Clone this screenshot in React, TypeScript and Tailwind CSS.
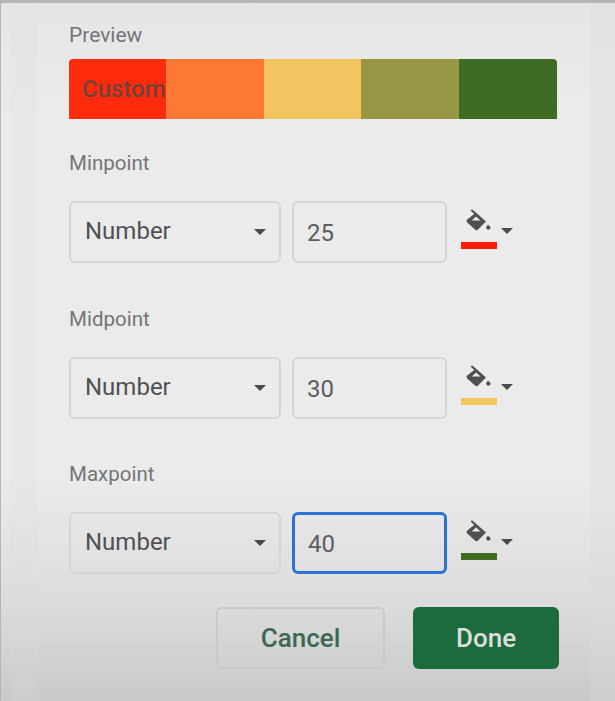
import React from 'react';

const FONT = "font-['Roboto','Liberation_Sans',sans-serif]";

const PaintIcon = () => (
  <svg width="26" height="24" viewBox="0 0 26 24" className="text-[#505052]">
    <path d="M4.6 1.4 L6 0.2 L11 4.6 L20 12.4 L12 20.6 C11.2 21.4 9.8 21.4 9 20.6 L1.2 13.4 C0.4 12.6 0.4 11.4 1.2 10.6 L8.2 5 Z" fill="currentColor" />
    <path d="M5.8 11.4 L10 7.4 L14.6 11.4 Z" fill="#ebebec" />
    <path d="M22 15.4 C23.2 16.8 24.6 17.4 24.6 18.8 C24.6 19.8 23.6 20.6 22.4 20.6 C21.2 20.6 20.2 19.8 20.2 18.8 C20.2 17.6 21 16.8 22 15.4 Z" fill="currentColor" />
  </svg>
);

const Caret = () => <span className="block h-0 w-0 border-x-[6.5px] border-t-[6px] border-x-transparent border-t-[#4a4a4c]" />;

interface RowProps {
  label: string;
  value: string;
  color: string;
  focused?: boolean;
}

const PointRow: React.FC<RowProps> = ({ label, value, color, focused }) => (
  <div>
    <div className="h-[24px] text-[20.5px] leading-[24px] text-[#747577]">{label}</div>
    <div className="mt-[26px] flex h-[62px] items-stretch">
      <div className="flex w-[212px] items-center justify-between rounded-[6px] border-2 border-[#d4d5d6] pl-[14px] pr-[13px]">
        <span className="-mt-[2px] text-[24px] text-[#505153]">Number</span>
        <Caret />
      </div>
      <div
        className={`ml-[11px] flex w-[155px] items-center rounded-[6px] pl-[13px] pt-[2px] text-[24px] text-[#5c5d5f] ${
          focused ? 'border-[3px] border-[#2a72d4]' : 'border-2 border-[#d4d5d6]'
        }`}
      >
        {value}
      </div>
      <div className="ml-[14px] flex w-[56px] flex-col pt-[8px]">
        <div className="flex h-[24px] items-start">
          <div className="ml-[5px] h-[24px] w-[26px]">
            <PaintIcon />
          </div>
          <div className="ml-[9px] mt-[19px]">
            <Caret />
          </div>
        </div>
        <div className="mt-[9px] h-[7px] w-[36px]" style={{ backgroundColor: color }} />
      </div>
    </div>
  </div>
);

export default function App() {
  return (
    <div className={`flex h-[701px] w-[615px] overflow-hidden border-t-[3px] border-l border-[#b4b5b6] bg-[linear-gradient(180deg,#e5e6e7_0%,#ebebec_16%,#ebebec_68%,#dcdcdc_86%,#c9c9c9_100%)] ${FONT}`}>
      <div className="w-[9px] shrink-0" />
      <div className="w-[28px] shrink-0 bg-[#d5dbe0]/20" />
      <div className="w-[31px] shrink-0" />
      <div className="flex-1">
        <div className="mt-[20px] h-[24px] text-[21px] leading-[24px] text-[#747577]">Preview</div>
        <div className="mt-[12px] flex h-[60px] w-[488px] overflow-hidden rounded-t-[4px]">
          <div className="flex w-[97px] items-center bg-[#fe2b0c] pl-[13px] text-[24px] font-medium whitespace-nowrap text-[#74403a]">Custom</div>
          <div className="w-[98px] bg-[#fd7735]" />
          <div className="w-[97px] bg-[#f3c561]" />
          <div className="w-[98px] bg-[#999745]" />
          <div className="w-[98px] bg-[#3e6c24]" />
        </div>
        <div className="mt-[32px] flex flex-col gap-[43.5px]">
          <PointRow label="Minpoint" value="25" color="#fb1c0c" />
          <PointRow label="Midpoint" value="30" color="#f2c65e" />
          <PointRow label="Maxpoint" value="40" color="#3f6c20" focused />
        </div>
        <div className="mt-[33px] flex h-[62px] w-[490px] justify-end gap-[28px]">
          <div className="flex w-[169px] items-center justify-center rounded-[6px] border-2 border-[#c8c9c9] text-[26px] font-medium text-[#3a6a52]">
            Cancel
          </div>
          <div className="flex w-[146px] items-center justify-center rounded-[6px] bg-[#1c6b3c] text-[26px] font-medium text-[#dcdedb]">
            Done
          </div>
        </div>
      </div>
      <div className="w-[25px] shrink-0 bg-[#d8d9da]/30" />
    </div>
  );
}
